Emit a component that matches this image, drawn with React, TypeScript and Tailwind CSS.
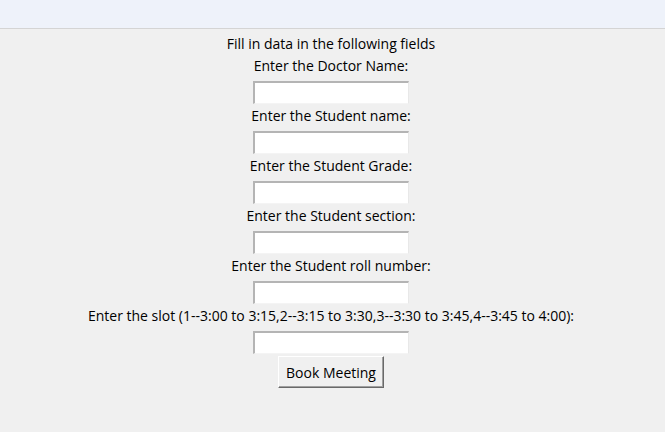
const labels = [
  "Enter the Doctor Name:",
  "Enter the Student name:",
  "Enter the Student Grade:",
  "Enter the Student section:",
  "Enter the Student roll number:",
  "Enter the slot (1--3:00 to 3:15,2--3:15 to 3:30,3--3:30 to 3:45,4--3:45 to 4:00):",
];

function Field({ label }: { label: string }) {
  return (
    <div className="flex flex-col items-center">
      <span className="h-[22px] leading-[22px] whitespace-nowrap">{label}</span>
      <input
        type="text"
        className="mt-[4px] mb-[1px] h-[23px] w-[156px] bg-white border-t-2 border-l-2 border-r border-b border-t-[#b4b4b4] border-l-[#b4b4b4] border-r-[#e8e8e8] border-b-[#f4f4f4] outline-none"
      />
    </div>
  );
}

export default function App() {
  return (
    <div className="w-[665px] h-[432px] bg-[#f0f0f0] text-[14px] text-black font-['Open_Sans',sans-serif]">
      <div className="h-[29px] bg-[#eef2fa] border-b border-[#d4d4d4]" />
      <div className="flex flex-col items-center pt-[4px] pr-[3px]">
        <span className="h-[22px] leading-[22px]">Fill in data in the following fields</span>
        {labels.map((l) => (
          <Field key={l} label={l} />
        ))}
        <button className="mt-[1px] h-[32px] w-[106px] bg-[#f0f0f0] border border-t-white border-l-white border-r-[#696969] border-b-[#696969] shadow-[inset_-1px_-1px_0_#a0a0a0]">
          Book Meeting
        </button>
      </div>
    </div>
  );
}
